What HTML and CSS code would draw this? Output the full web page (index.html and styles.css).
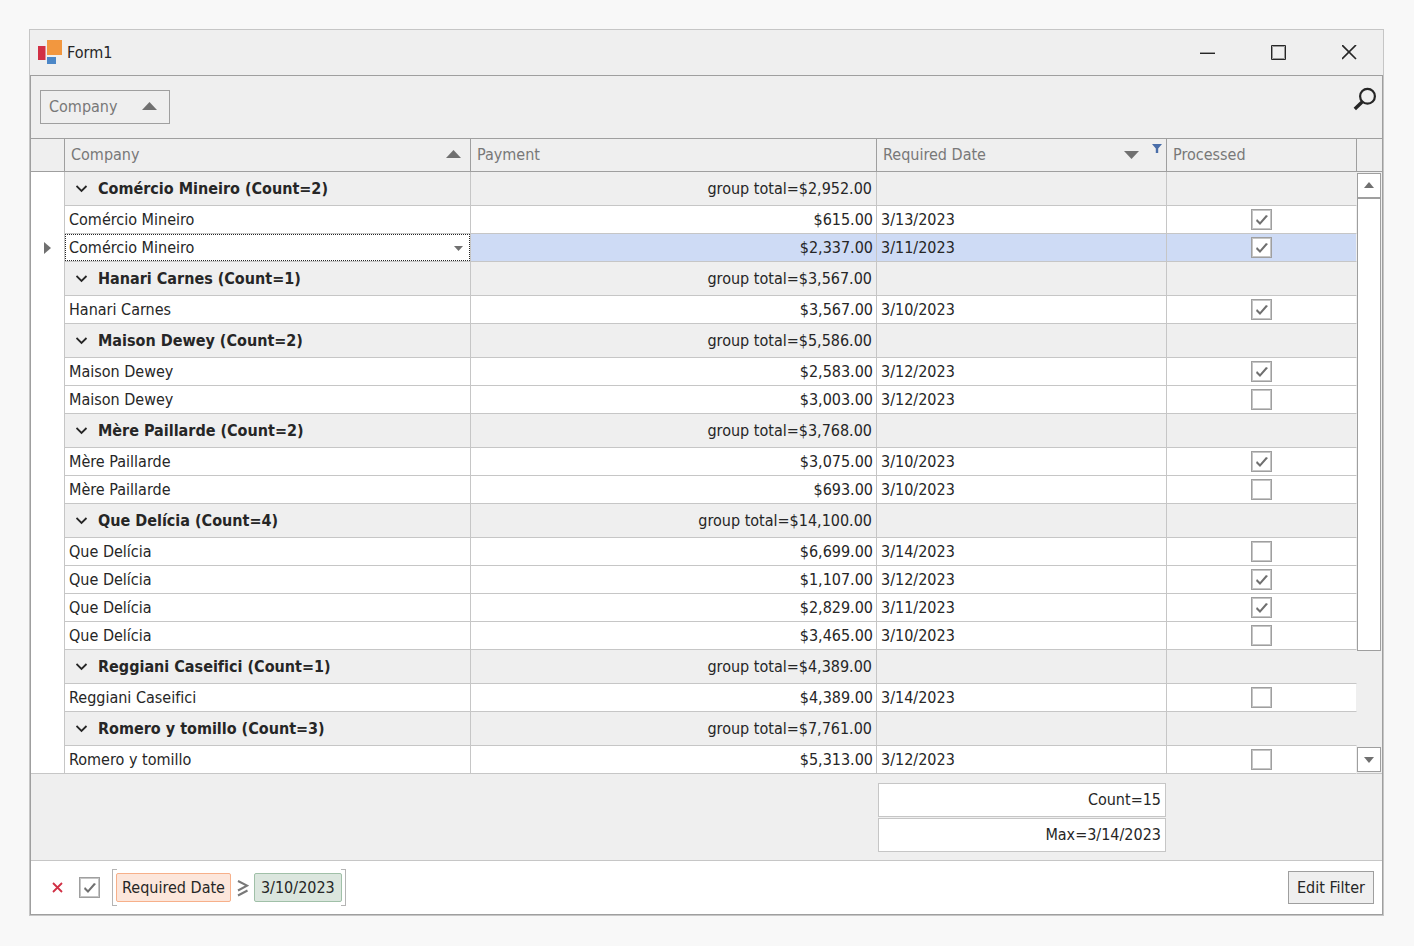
FILE: index.html
```html
<!DOCTYPE html>
<html lang="en">
<head>
<meta charset="utf-8">
<title>Form1</title>
<link rel="stylesheet" href="styles.css">
</head>
<body>
<main class="window">
  <header class="titlebar">
    <svg class="logo" width="24" height="25" viewBox="0 0 24 25" aria-hidden="true"><path fill="#d13045" d="M0 6h7.500v14H0z"/><path fill="#f2973f" d="M9 0h15v15H9z"/><path fill="#4c87c7" d="M9 17h9v7H9z"/></svg>
    <h1 class="title">Form1</h1>
    <div class="window-buttons">
      <button class="window-button" aria-label="Minimize"><svg width="15" height="15"><path d="M0 7.5h15" stroke="#999"/><path d="M0 8.5h15" stroke="#262626"/></svg></button>
      <button class="window-button" aria-label="Maximize"><svg width="15" height="15"><path d="M1.5 1.5h12v12h-12z" fill="none" stroke="#999"/><path d="M.5.5h14v14H.5z" fill="none" stroke="#262626"/></svg></button>
      <button class="window-button" aria-label="Close"><svg width="15" height="15"><path d="M0 0l14 14M14 0L0 14" stroke="#262626" stroke-width="1.7"/></svg></button>
    </div>
  </header>
  <div class="client">
    <div class="group-panel">
      <button class="group-chip">Company <svg class="sort" width="15" height="10"><path d="M0 8L7.5 0 15 8z"/></svg></button>
      <button class="search" aria-label="Search"><svg width="24" height="24" fill="none" stroke="#262626"><circle cx="15.5" cy="9.3" r="7.4" stroke-width="2.2"/><path d="M10.300 14.700L2.800 22" stroke-width="3.400"/></svg></button>
    </div>
    <div class="grid">
      <table class="data">
        <colgroup><col class="col-mark"><col><col><col class="col-date"><col class="col-done"></colgroup>
        <thead>
          <tr>
            <th aria-label="Row indicator"></th>
            <th><div class="head">Company <svg class="sort head-sort" width="15" height="10"><path d="M0 8L7.5 0 15 8z"/></svg></div></th>
            <th><div class="head">Payment</div></th>
            <th><div class="head">Required Date <svg class="sort date-sort" width="15" height="8"><path d="M0 0h15L7.5 8z"/></svg><svg class="funnel" width="10" height="9"><path d="M0 0h10L6.2 4.5V9H3.8V4.5z" fill="#4a6ea9"/></svg></div></th>
            <th><div class="head">Processed</div></th>
          </tr>
        </thead>
        <tbody id="rows"></tbody>
      </table>
      <div class="scroll">
        <div class="scroll-head"></div>
        <div class="scroll-track">
          <button class="scroll-button" aria-label="Scroll up"><svg class="sort" width="10" height="8"><path d="M0 6L5 0l5 6z"/></svg></button>
          <div class="thumb"></div>
          <button class="scroll-button scroll-down" aria-label="Scroll down"><svg class="sort" width="10" height="6"><path d="M0 0h10L5 6z"/></svg></button>
        </div>
      </div>
    </div>
    <div class="summary">
      <div class="summary-cells">
        <div class="total">Count=15</div>
        <div class="total">Max=3/14/2023</div>
      </div>
    </div>
    <footer class="filter">
      <button class="clear" aria-label="Clear filter"><svg width="11" height="11"><path d="M1 1l9 9M10 1l-9 9" stroke="#d13045" stroke-width="1.8"/></svg></button>
      <input class="check" type="checkbox" aria-label="Filter enabled" checked>
      <div class="condition">
        <button class="tag field">Required Date</button>
        <svg class="operator" width="12" height="18" fill="none" stroke="#787878" stroke-width="2" role="img" aria-label="is greater than or equal to"><path d="M1 2l9 4.700L1 11.500M1 16.500l9.500-5"/></svg>
        <button class="tag value">3/10/2023</button>
      </div>
      <button class="edit">Edit Filter</button>
    </footer>
  </div>
</main>
<script src="rows.js"></script>
</body>
</html>
```
FILE: styles.css
```css
* {
  box-sizing: border-box;
}

body {
  margin: 0;
  padding: 29px 30px 30px 29px;
  background: #f8f8f8;
  color: #262626;
  font: 16px/24px "DejaVu Sans Condensed", "DejaVu Sans", sans-serif;
  font-variant-ligatures: none;
}

button,
input,
select {
  margin: 0;
  padding: 0;
  border: 0;
  border-radius: 0;
  background: none;
  color: inherit;
  font: inherit;
}

svg {
  display: block;
}

.window {
  border: 1px solid #c6c6c6;
  background: #efefef;
}

.titlebar {
  display: flex;
  align-items: center;
  height: 45px;
  padding-left: 8px;
}

.title {
  margin: 0 0 0 5px;
  font-size: 16px;
  font-weight: 400;
}

.window-buttons {
  display: flex;
  gap: 4px;
  margin-left: auto;
}

.window-button {
  display: grid;
  place-items: center;
  width: 67px;
  height: 45px;
}

.client {
  border: 1px solid #9f9f9f;
}

.group-panel {
  display: flex;
  justify-content: space-between;
  align-items: flex-start;
  padding: 14px 6px 14px 9px;
  border-bottom: 1px solid #9f9f9f;
}

.group-chip {
  display: flex;
  justify-content: space-between;
  align-items: center;
  width: 130px;
  height: 34px;
  padding: 0 12px 0 8px;
  border: 1px solid #9f9f9f;
  color: #787878;
}

.search {
  margin-top: -3px;
}

.sort {
  fill: #707070;
}

.grid {
  display: flex;
}

.data {
  flex: 1;
  width: 0;
  table-layout: fixed;
  border-spacing: 0;
}

.col-mark {
  width: 34px;
}

.col-date {
  width: 290px;
}

.col-done {
  width: 190px;
}

.data th {
  height: 33px;
  padding: 0;
  border: solid #9f9f9f;
  border-width: 0 1px 1px 0;
  color: #787878;
  font-weight: 400;
  text-align: left;
}

.head {
  display: flex;
  align-items: center;
  padding: 0 6px;
}

.head-sort {
  margin-left: auto;
  margin-right: 3px;
}

.date-sort {
  margin-left: auto;
}

.funnel {
  align-self: flex-start;
  margin: 1px -2px 0 13px;
}

.data td {
  height: 28px;
  padding: 0 3px 0 4px;
  border: solid #c6c6c6;
  border-width: 0 1px 1px 0;
  background: #fff;
}

.data .group td {
  height: 34px;
  background: #efefef;
}

.data .mark,
.data .group .mark {
  padding: 0 0 0 13px;
  border-bottom: 0;
  background: #fff;
}

.data tr:last-child .mark {
  border-bottom: 1px solid #c6c6c6;
}

.data td:last-child {
  border-right-color: #efefef;
}

.data .money {
  text-align: right;
}

.data .group .money {
  padding-right: 4px;
}

.data .done {
  padding: 0;
}

.done .check {
  margin: 0 auto;
}

.data .selected td {
  background: #cedbf5;
}

.data .selected .mark {
  background: #fff;
}

.data .selected .editor {
  padding: 0;
  background: #fff;
}

.combo {
  position: relative;
}

.company-select {
  appearance: none;
  display: block;
  width: 100%;
  height: 27px;
  padding-left: 3px;
  border: 1px dotted #262626;
}

.combo-arrow {
  position: absolute;
  right: 7px;
  top: 12px;
  pointer-events: none;
}

.group-title {
  display: flex;
  align-items: center;
  gap: 10px;
  padding-left: 7px;
  font-weight: 700;
}

.check {
  appearance: none;
  display: block;
  width: 21px;
  height: 21px;
  border: 1px solid #9f9f9f;
  background: #fff;
  box-shadow: inset 0 0 0 1px #c6c6c6;
}

.check:checked::before {
  content: "";
  display: block;
  width: 19px;
  height: 19px;
  background: #707070;
  clip-path: polygon(4px 11px, 5px 9px, 8px 12px, 14px 5px, 16px 6px, 8px 15px);
}

.scroll {
  display: flex;
  flex-direction: column;
  width: 25px;
}

.scroll-head {
  height: 33px;
  border-bottom: 1px solid #9f9f9f;
}

.scroll-track {
  display: flex;
  flex: 1;
  flex-direction: column;
  padding: 1px 1px 1px 0;
  border-bottom: 1px solid #c6c6c6;
}

.scroll-button {
  display: grid;
  place-items: center;
  height: 25px;
  border: 1px solid #9f9f9f;
  background: #fff;
}

.scroll-down {
  margin-top: auto;
}

.thumb {
  height: 453px;
  border: 1px solid #9f9f9f;
  background: #fff;
}

.summary {
  display: flex;
  justify-content: flex-end;
  padding: 9px 216px 8px 0;
  border-bottom: 1px solid #c6c6c6;
}

.summary-cells {
  display: grid;
  gap: 1px;
  width: 288px;
}

.total {
  padding: 4px;
  border: 1px solid #c6c6c6;
  background: #fff;
  text-align: right;
}

.filter {
  display: flex;
  align-items: center;
  height: 53px;
  padding: 0 8px 0 21px;
  background: #fff;
}

.clear {
  margin-right: 16px;
}

.condition {
  position: relative;
  display: flex;
  align-items: center;
  height: 37px;
  margin-left: 12px;
  padding: 0 4px;
}

.condition::before,
.condition::after {
  content: "";
  position: absolute;
  top: 0;
  bottom: 0;
  width: 4px;
  border: 1px solid #b4b4b4;
}

.condition::before {
  left: 0;
  border-right: 0;
}

.condition::after {
  right: 0;
  border-left: 0;
}

.tag {
  height: 29px;
  padding: 0 5px;
  border: 1px solid;
  border-radius: 2px;
}

.field {
  border-color: #f7b08a;
  background: #fce6db;
}

.value {
  padding: 0 6px;
  border-color: #a0c0a8;
  background: #dbe6de;
}

.operator {
  margin: 0 5px 0 6px;
}

.edit {
  width: 86px;
  height: 33px;
  margin-left: auto;
  border: 1px solid #9f9f9f;
  background: #efefef;
}
```
FILE: rows.js
```js
const groups = [
  ["Comércio Mineiro", 2, "$2,952.00", [["$615.00", "3/13/2023", true], ["$2,337.00", "3/11/2023", true, true]]],
  ["Hanari Carnes", 1, "$3,567.00", [["$3,567.00", "3/10/2023", true]]],
  ["Maison Dewey", 2, "$5,586.00", [["$2,583.00", "3/12/2023", true], ["$3,003.00", "3/12/2023", false]]],
  ["Mère Paillarde", 2, "$3,768.00", [["$3,075.00", "3/10/2023", true], ["$693.00", "3/10/2023", false]]],
  ["Que Delícia", 4, "$14,100.00", [["$6,699.00", "3/14/2023", false], ["$1,107.00", "3/12/2023", true], ["$2,829.00", "3/11/2023", true], ["$3,465.00", "3/10/2023", false]]],
  ["Reggiani Caseifici", 1, "$4,389.00", [["$4,389.00", "3/14/2023", false]]],
  ["Romero y tomillo", 3, "$7,761.00", [["$5,313.00", "3/12/2023", false]]]
];

const chevron = '<svg width="12" height="8" fill="none" stroke="#262626" stroke-width="1.8"><path d="M.5 1l5 5 5-5"/></svg>';
const marker = '<svg class="sort" width="7" height="12"><path d="M0 0l7 6-7 6z"/></svg>';
const arrow = '<svg class="sort combo-arrow" width="9" height="5"><path d="M0 0h9L4.500 5z"/></svg>';

const groupRow = ([name, count, total]) => `<tr class="group">
  <td class="mark"></td>
  <td><div class="group-title"><button aria-label="Collapse ${name}">${chevron}</button>${name} (Count=${count})</div></td>
  <td class="money">group total=${total}</td><td></td><td></td></tr>`;

const dataRow = (name, [payment, date, done, selected]) => `<tr class="${selected ? "selected" : ""}">
  <td class="mark">${selected ? marker : ""}</td>
  ${selected
    ? `<td class="editor"><div class="combo"><select class="company-select" aria-label="Company"><option>${name}</option></select>${arrow}</div></td>`
    : `<td>${name}</td>`}
  <td class="money">${payment}</td><td>${date}</td>
  <td class="done"><input class="check" type="checkbox" aria-label="Processed" ${done ? "checked" : ""}></td></tr>`;

document.getElementById("rows").innerHTML = groups
  .map(group => groupRow(group) + group[3].map(row => dataRow(group[0], row)).join(""))
  .join("");
```
